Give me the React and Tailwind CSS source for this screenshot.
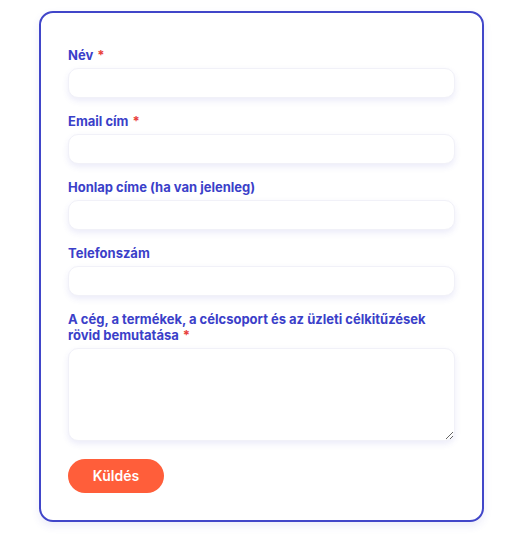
import React from "react";

function Field({ label, required, children }) {
  return (
    <div>
      <label className="mb-[5px] block text-[13px] font-bold leading-4 text-[#3b3fc9]">
        {label}
        {required && <span className="ml-1 text-[#e8403b]">*</span>}
      </label>
      {children}
    </div>
  );
}

const inputCls =
  "block w-full rounded-[10px] border border-[#f1f1f8] bg-white px-3 text-sm outline-none shadow-[0_3px_6px_rgba(67,70,200,0.10)]";

export default function App() {
  return (
    <div
      className="min-h-screen bg-white pt-[11px]"
      style={{ fontFamily: "Inter, 'Noto Sans', sans-serif" }}
    >
      <form
        onSubmit={(e) => e.preventDefault()}
        className="mx-auto w-[445px] rounded-[14px] border-2 border-[#4146c9] bg-white px-[27px] pb-[27px] pt-[34px] shadow-[0_4px_8px_rgba(65,70,201,0.10)]"
      >
        <div className="flex flex-col gap-[15px]">
          <Field label="Név" required>
            <input className={`${inputCls} h-[30px]`} />
          </Field>
          <Field label="Email cím" required>
            <input type="email" className={`${inputCls} h-[30px]`} />
          </Field>
          <Field label="Honlap címe (ha van jelenleg)">
            <input className={`${inputCls} h-[30px]`} />
          </Field>
          <Field label="Telefonszám">
            <input className={`${inputCls} h-[30px]`} />
          </Field>
          <Field
            label="A cég, a termékek, a célcsoport és az üzleti célkitűzések rövid bemutatása"
            required
          >
            <textarea className={`${inputCls} h-[93px] py-2`} />
          </Field>
        </div>
        <button
          type="submit"
          className="mt-[18px] h-[34px] w-[96px] rounded-full bg-[#ff5e3a] text-sm font-semibold text-white"
        >
          Küldés
        </button>
      </form>
    </div>
  );
}
